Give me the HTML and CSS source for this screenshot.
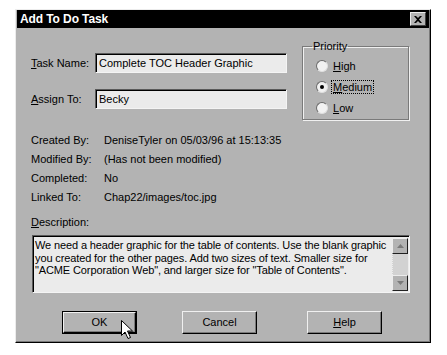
FILE: index.html
```html
<!DOCTYPE html>
<html lang="en">
<head>
    <meta charset="UTF-8">
    <title>Add To Do Task</title>
    <link rel="stylesheet" href="styles.css">
</head>
<body>
    <div class="dialog">
        <div class="titlebar">
            <span class="title">Add To Do Task</span>
            <span class="close">
                <svg width="8" height="7" viewBox="0 0 8 7"><path d="M0 0h2l2 2 2-2h2L5 3.5 8 7H6L4 5 2 7H0l3-3.5z" fill="#000"/></svg>
            </span>
        </div>

        <div class="content">
            <div class="top">
                <div class="fields">
                    <div class="field-row">
                        <label class="field-label"><u>T</u>ask Name:</label>
                        <div class="input">Complete TOC Header Graphic</div>
                    </div>
                    <div class="field-row">
                        <label class="field-label"><u>A</u>ssign To:</label>
                        <div class="input">Becky</div>
                    </div>
                </div>

                <fieldset class="priority">
                    <legend>Priority</legend>
                    <div class="radio-row"><span class="radio"></span><span><u>H</u>igh</span></div>
                    <div class="radio-row"><span class="radio checked"></span><span class="focus"><u>M</u>edium</span></div>
                    <div class="radio-row"><span class="radio"></span><span><u>L</u>ow</span></div>
                </fieldset>
            </div>

            <div class="info">
                <span>Created By:</span><span>DeniseTyler on 05/03/96 at 15:13:35</span>
                <span>Modified By:</span><span>(Has not been modified)</span>
                <span>Completed:</span><span>No</span>
                <span>Linked To:</span><span>Chap22/images/toc.jpg</span>
            </div>

            <div class="desc-label"><u>D</u>escription:</div>
            <div class="desc-box">
                <div class="desc-text">We need a header graphic for the table of contents. Use the blank graphic you created for the other pages. Add two sizes of text. Smaller size for "ACME Corporation Web", and larger size for "Table of Contents".</div>
                <div class="scrollbar">
                    <span class="scroll-btn"><svg width="7" height="4" viewBox="0 0 7 4"><path d="M3.5 0L7 4H0z" fill="#7a7a7a"/></svg></span>
                    <span class="scroll-track"></span>
                    <span class="scroll-btn"><svg width="7" height="4" viewBox="0 0 7 4"><path d="M0 0h7L3.5 4z" fill="#7a7a7a"/></svg></span>
                </div>
            </div>

            <div class="buttons">
                <div class="btn-default"><div class="btn">OK</div></div>
                <div class="btn btn-cancel">Cancel</div>
                <div class="btn btn-help"><u>H</u>elp</div>
            </div>
        </div>

        <svg class="cursor" width="13" height="20" viewBox="0 0 13 20">
            <path d="M0.5 0.5v15l3.5-3.5 3 6.5 2.5-1-3-6.5h5z" fill="#fff" stroke="#000" stroke-width="1"/>
        </svg>
    </div>
</body>
</html>
```

FILE: styles.css
```css
body {
    margin: 0;
    background: #fff;
    font-family: "Liberation Sans", Arial, sans-serif;
    font-size: 11px;
    color: #000;
}
u {
    text-decoration: underline;
    text-underline-offset: 1px;
}
.dialog {
    position: relative;
    margin: 9px 0 0 15px;
    width: 414px;
    background: #b3b3b3;
    border-left: 1px solid #ececec;
    border-top: 1px solid #ececec;
    border-right: 1px solid #000;
    border-bottom: 1px solid #000;
    box-shadow: inset -1px -1px 0 #7a7a7a;
}
.titlebar {
    display: flex;
    align-items: center;
    justify-content: space-between;
    height: 18px;
    margin: 0 1px;
    background: #000;
    color: #fff;
    padding: 0 3px;
}
.title {
    font-weight: bold;
    font-size: 12px;
    letter-spacing: -0.1px;
}
.close {
    display: flex;
    align-items: center;
    justify-content: center;
    width: 14px;
    height: 12px;
    background: #b3b3b3;
    border-left: 1px solid #ececec;
    border-top: 1px solid #ececec;
    border-right: 1px solid #404040;
    border-bottom: 1px solid #404040;
}
.content {
    padding: 0 20px 8px 15px;
}
.top {
    display: flex;
    align-items: flex-start;
    justify-content: space-between;
}
.fields {
    padding-top: 25px;
}
.field-row {
    display: flex;
    align-items: center;
    margin-bottom: 16px;
}
.field-label {
    width: 64px;
}
.input {
    width: 187px;
    height: 18px;
    line-height: 18px;
    padding-left: 3px;
    background: #ebebeb;
    border-top: 1px solid #5a5a5a;
    border-left: 1px solid #5a5a5a;
    border-right: 1px solid #f4f4f4;
    border-bottom: 1px solid #f4f4f4;
    box-shadow: inset 1px 1px 0 #000;
}
.priority {
    margin: 12px 1px 0 0;
    padding: 0 0 1px 13px;
    width: 92px;
    border: 1px solid #7a7a7a;
    box-shadow: 1px 1px 0 #f0f0f0, inset 1px 1px 0 #f0f0f0;
}
.priority legend {
    padding: 0 1px;
    margin-left: -4px;
    line-height: 13px;
}
.radio-row {
    display: flex;
    align-items: center;
    gap: 5px;
    height: 21px;
}
.radio-row:first-of-type {
    margin-top: 2px;
}
.radio {
    position: relative;
    width: 10px;
    height: 10px;
    border-radius: 50%;
    background: #f2f2f2;
    border-top: 1px solid #6a6a6a;
    border-left: 1px solid #6a6a6a;
    border-right: 1px solid #e0e0e0;
    border-bottom: 1px solid #e0e0e0;
}
.radio.checked::after {
    content: "";
    position: absolute;
    left: 3px;
    top: 3px;
    width: 4px;
    height: 4px;
    border-radius: 50%;
    background: #000;
}
.focus {
    outline: 1px dotted #000;
    padding: 0 1px;
    margin-left: -1px;
}
.info {
    display: grid;
    grid-template-columns: 73px auto;
    grid-auto-rows: 19px;
    align-items: center;
    margin-top: 5px;
}
.desc-label {
    margin-top: 10px;
    line-height: 13px;
}
.desc-box {
    display: flex;
    margin: 6px 0 0 1px;
    height: 56px;
    background: #ebebeb;
    border-top: 1px solid #5a5a5a;
    border-left: 1px solid #5a5a5a;
    border-right: 1px solid #f4f4f4;
    border-bottom: 1px solid #f4f4f4;
    box-shadow: inset 1px 1px 0 #000;
}
.desc-text {
    flex: 1;
    padding: 3px 0 0 2px;
    line-height: 12.5px;
    letter-spacing: -0.12px;
}
.scrollbar {
    display: flex;
    flex-direction: column;
    width: 16px;
    margin: 2px 1px 1px 0;
}
.scroll-btn {
    display: flex;
    align-items: center;
    justify-content: center;
    height: 14px;
    background: #b3b3b3;
    border-left: 1px solid #ececec;
    border-top: 1px solid #ececec;
    border-right: 1px solid #202020;
    border-bottom: 1px solid #202020;
}
.scroll-track {
    flex: 1;
    background: #d2d2d2;
    border-left: 1px dotted #ececec;
}
.buttons {
    display: flex;
    margin-top: 18px;
    padding-left: 31px;
}
.btn {
    width: 71px;
    height: 19px;
    line-height: 19px;
    text-align: center;
    background: #b3b3b3;
    border-left: 1px solid #f0f0f0;
    border-top: 1px solid #f0f0f0;
    border-right: 1px solid #000;
    border-bottom: 1px solid #000;
    box-shadow: inset -1px -1px 0 #7a7a7a;
}
.btn-default {
    border: 1px solid #000;
}
.btn-cancel {
    width: 73px;
    height: 21px;
    line-height: 21px;
    margin-left: 45px;
}
.btn-help {
    width: 73px;
    height: 21px;
    line-height: 21px;
    margin-left: 50px;
}
.cursor {
    position: absolute;
    left: 105px;
    top: 310px;
}
```
